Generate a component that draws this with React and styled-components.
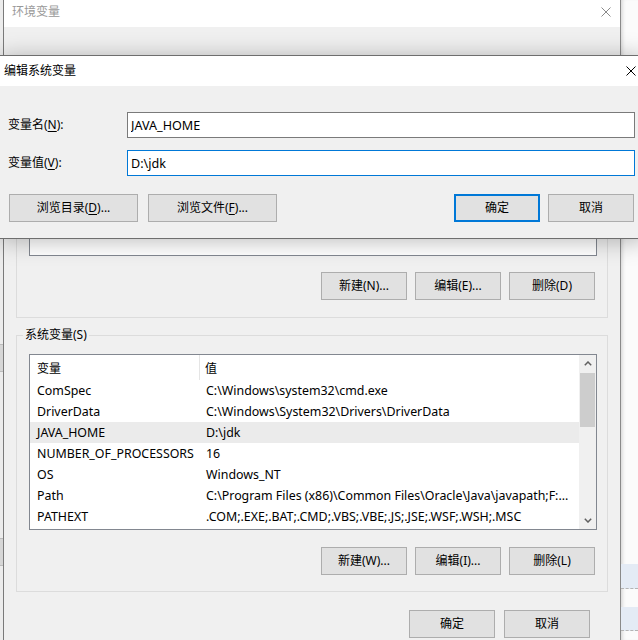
import React from 'react';
import styled, { createGlobalStyle } from 'styled-components';

const GlobalStyle = createGlobalStyle`
  html, body {
    margin: 0;
    padding: 0;
    background: #fff;
  }
  body {
    font-family: "Noto Sans", "Noto Sans CJK SC", sans-serif;
    font-size: 12px;
    color: #000;
  }
  #root {
    width: 638px;
    height: 640px;
  }
`;

const Screen = styled.div`
  position: relative;
  display: flex;
  width: 638px;
  height: 640px;
  overflow: hidden;
  background: #fafafa;
`;

const LeftEdge = styled.div`
  width: 3px;
  flex: none;
  background: #ececec;
  display: flex;
  flex-direction: column;
`;

const EdgeBlock = styled.div`
  height: ${(p) => p.$h}px;
  margin-top: ${(p) => p.$top}px;
  background: #d6d6d6;
  border-top: 1px solid #bcbcbc;
  border-bottom: 1px solid #bcbcbc;
`;

const RightEdge = styled.div`
  flex: 1;
  display: flex;
  flex-direction: column;
  background: #fbfbfb;
  box-shadow: inset 4px 0 4px -3px rgba(0, 0, 0, 0.18);
`;

const EdgeRow = styled.div`
  height: ${(p) => p.$h}px;
  margin-top: ${(p) => p.$top}px;
  background: #e4ebf5;
  border-bottom: 1px dashed #b4b4b4;
`;

const EnvWindow = styled.div`
  width: 618px;
  flex: none;
  box-sizing: border-box;
  display: flex;
  flex-direction: column;
  background: #f0f0f0;
  border-left: 1px solid #7a7a7a;
  border-right: 1px solid #8a8a8a;
`;

const TitleBar = styled.div`
  height: ${(p) => p.$height}px;
  flex: none;
  box-sizing: border-box;
  display: flex;
  align-items: center;
  justify-content: space-between;
  background: #fff;
  padding: ${(p) => p.$pad};
`;

const TitleText = styled.span`
  line-height: 16px;
  color: ${(p) => (p.$inactive ? '#999' : '#000')};
`;

const WindowBody = styled.div`
  padding: 33px 12px 0 12px;
`;

const GroupBox = styled.fieldset`
  margin: ${(p) => p.$top}px 0 0 0;
  padding: 0 10px ${(p) => p.$padBottom}px 12px;
  border: 1px solid #dcdcdc;
  min-width: 0;
`;

const Legend = styled.legend`
  min-height: 16px;
  margin-left: -6px;
  padding: 0 2px;
  line-height: 16px;
  font-size: 12px;
`;

const ListBox = styled.div`
  margin-top: ${(p) => p.$top}px;
  height: ${(p) => p.$height}px;
  box-sizing: border-box;
  display: flex;
  background: #fff;
  border: 1px solid #828790;
`;

const ListContent = styled.div`
  flex: 1;
  min-width: 0;
  overflow: hidden;
`;

const HeaderRow = styled.div`
  display: grid;
  grid-template-columns: 170px 1fr;
  height: 25px;
`;

const HeaderCell = styled.div`
  display: flex;
  align-items: center;
  padding-left: ${(p) => (p.$first ? 7 : 5)}px;
  border-right: ${(p) => (p.$first ? '1px solid #e5e5e5' : 'none')};
`;

const Row = styled.div`
  display: grid;
  grid-template-columns: 170px 1fr;
  height: 21px;
  background: ${(p) => (p.$selected ? '#ebebeb' : 'transparent')};
`;

const Cell = styled.div`
  font-size: 12.4px;
  line-height: 21px;
  padding-left: ${(p) => (p.$first ? 7 : 6)}px;
  white-space: nowrap;
  overflow: hidden;
`;

const ScrollBar = styled.div`
  width: 17px;
  flex: none;
  display: flex;
  flex-direction: column;
  background: #f0f0f0;
`;

const ScrollButton = styled.div`
  height: 17px;
  flex: none;
  display: flex;
  align-items: center;
  justify-content: center;
`;

const ScrollTrack = styled.div`
  flex: 1;
`;

const ScrollThumb = styled.div`
  height: 54px;
  margin: 1px 1px 0 1px;
  background: #cdcdcd;
`;

const ButtonRow = styled.div`
  display: flex;
  justify-content: flex-end;
  gap: ${(p) => p.$gap}px;
  margin-top: ${(p) => p.$top}px;
  margin-right: ${(p) => p.$right}px;
`;

const Button = styled.button`
  width: ${(p) => p.$w}px;
  height: 28px;
  flex: none;
  box-sizing: border-box;
  padding: 0;
  margin: 0;
  background: #e1e1e1;
  border: ${(p) => (p.$default ? '2px solid #0078d7' : '1px solid #adadad')};
  font: inherit;
  color: #000;
  line-height: 16px;
`;

const Mnemonic = styled.u`
  text-underline-offset: 2px;
`;

const EditDialog = styled.div`
  position: absolute;
  top: 55px;
  left: -1px;
  width: 648px;
  box-sizing: border-box;
  background: #f0f0f0;
  border: 1px solid #6e6e6e;
  box-shadow: 0 2px 22px rgba(0, 0, 0, 0.28);
`;

const DialogBody = styled.div`
  padding: 26px 11px 16px 8px;
`;

const FormGrid = styled.div`
  display: grid;
  grid-template-columns: 119px 1fr;
  row-gap: 12px;
  align-items: center;
`;

const FieldLabel = styled.label`
  line-height: 16px;
`;

const TextInput = styled.input`
  height: 26px;
  box-sizing: border-box;
  margin: 0;
  padding: 0 3px;
  background: #fff;
  border: 1px solid ${(p) => (p.$focused ? '#0078d7' : '#7a7a7a')};
  font: inherit;
  font-size: 12.6px;
  color: #000;
  outline: none;
`;

const DialogButtons = styled.div`
  display: flex;
  align-items: center;
  margin: 18px 1px 0 1px;
`;

const ButtonGroup = styled.div`
  display: flex;
  gap: ${(p) => p.$gap}px;
  margin-left: ${(p) => (p.$push ? 'auto' : '0')};
`;

const systemVars = [
  ['ComSpec', 'C:\\Windows\\system32\\cmd.exe'],
  ['DriverData', 'C:\\Windows\\System32\\Drivers\\DriverData'],
  ['JAVA_HOME', 'D:\\jdk'],
  ['NUMBER_OF_PROCESSORS', '16'],
  ['OS', 'Windows_NT'],
  ['Path', 'C:\\Program Files (x86)\\Common Files\\Oracle\\Java\\javapath;F:...'],
  ['PATHEXT', '.COM;.EXE;.BAT;.CMD;.VBS;.VBE;.JS;.JSE;.WSF;.WSH;.MSC'],
];

function CloseIcon({ color }) {
  return (
    <svg width="10" height="10" viewBox="0 0 10 10">
      <path d="M0.5 0.5L9.5 9.5M9.5 0.5L0.5 9.5" stroke={color} strokeWidth="1" fill="none" />
    </svg>
  );
}

function Chevron({ up }) {
  return (
    <svg width="8" height="5" viewBox="0 0 8 5">
      <polyline
        points={up ? '0.8,4.2 4,1 7.2,4.2' : '0.8,0.8 4,4 7.2,0.8'}
        stroke="#606060"
        strokeWidth="1.5"
        fill="none"
      />
    </svg>
  );
}

function App() {
  return (
    <Screen>
      <GlobalStyle />
      <LeftEdge>
        <EdgeBlock $top={344} $h={26} />
        <EdgeBlock $top={166} $h={26} />
      </LeftEdge>

      <EnvWindow>
        <TitleBar $height={27} $pad="0 9px 3px 8px">
          <TitleText $inactive>环境变量</TitleText>
          <CloseIcon color="#8a8a8a" />
        </TitleBar>
        <WindowBody>
          {/* user variables group: its top sits behind the edit dialog */}
          <GroupBox $top={0} $padBottom={17}>
            <Legend />
            <ListBox $top={8} $height={172} />
            <ButtonRow $gap={8} $top={16} $right={2}>
              <Button $w={86}>新建(N)...</Button>
              <Button $w={86}>编辑(E)...</Button>
              <Button $w={86}>删除(D)</Button>
            </ButtonRow>
          </GroupBox>

          <GroupBox $top={9} $padBottom={16}>
            <Legend>系统变量(S)</Legend>
            <ListBox $top={11} $height={176}>
              <ListContent>
                <HeaderRow>
                  <HeaderCell $first>变量</HeaderCell>
                  <HeaderCell>值</HeaderCell>
                </HeaderRow>
                {systemVars.map(([name, value]) => (
                  <Row key={name} $selected={name === 'JAVA_HOME'}>
                    <Cell $first>{name}</Cell>
                    <Cell>{value}</Cell>
                  </Row>
                ))}
              </ListContent>
              <ScrollBar>
                <ScrollButton>
                  <Chevron up />
                </ScrollButton>
                <ScrollTrack>
                  <ScrollThumb />
                </ScrollTrack>
                <ScrollButton>
                  <Chevron />
                </ScrollButton>
              </ScrollBar>
            </ListBox>
            <ButtonRow $gap={8} $top={17} $right={2}>
              <Button $w={86}>新建(W)...</Button>
              <Button $w={86}>编辑(I)...</Button>
              <Button $w={86}>删除(L)</Button>
            </ButtonRow>
          </GroupBox>

          <ButtonRow $gap={9} $top={18} $right={18}>
            <Button $w={86}>确定</Button>
            <Button $w={86}>取消</Button>
          </ButtonRow>
        </WindowBody>
      </EnvWindow>

      <RightEdge>
        <EdgeRow $top={564} $h={24} />
        <EdgeRow $top={18} $h={23} />
      </RightEdge>

      <EditDialog>
        <TitleBar $height={30} $pad="0 10px 0 4px">
          <TitleText>编辑系统变量</TitleText>
          <CloseIcon color="#000" />
        </TitleBar>
        <DialogBody>
          <FormGrid>
            <FieldLabel>
              变量名(<Mnemonic>N</Mnemonic>):
            </FieldLabel>
            <TextInput readOnly value="JAVA_HOME" />
            <FieldLabel>
              变量值(<Mnemonic>V</Mnemonic>):
            </FieldLabel>
            <TextInput readOnly value="D:\jdk" $focused />
          </FormGrid>
          <DialogButtons>
            <ButtonGroup $gap={10}>
              <Button $w={129}>
                浏览目录(<Mnemonic>D</Mnemonic>)...
              </Button>
              <Button $w={129}>
                浏览文件(<Mnemonic>F</Mnemonic>)...
              </Button>
            </ButtonGroup>
            <ButtonGroup $gap={8} $push>
              <Button $w={86} $default>
                确定
              </Button>
              <Button $w={86}>取消</Button>
            </ButtonGroup>
          </DialogButtons>
        </DialogBody>
      </EditDialog>
    </Screen>
  );
}

export default App;
